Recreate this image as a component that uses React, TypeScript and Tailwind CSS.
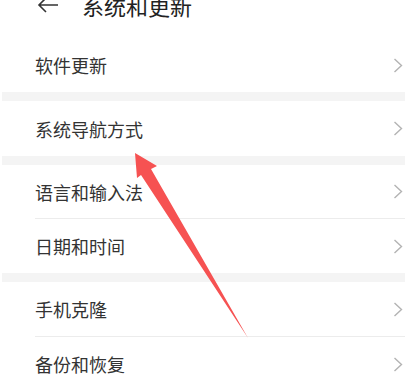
import React from 'react';

const font = { fontFamily: '"Noto Sans CJK SC", "Noto Sans", sans-serif' };

function Chevron() {
  return (
    <svg width="10" height="15" viewBox="0 0 10 15" className="shrink-0">
      <path d="M1.5 1 L8.5 7.5 L1.5 14" fill="none" stroke="#b3b3b3" strokeWidth="1.4" />
    </svg>
  );
}

function Row({ label, divider, tall }: { label: string; divider?: boolean; tall?: boolean }) {
  return (
    <div className="pl-[35px]">
      <div
        className={`flex items-center justify-between pr-[2px] ${tall ? 'h-[55px]' : 'h-[54px]'} ${
          divider ? 'border-b border-[#ececec]' : ''
        }`}
      >
        <span className="text-[18px] text-[#333333] leading-none">{label}</span>
        <Chevron />
      </div>
    </div>
  );
}

function Band() {
  return <div className="h-[9px] ml-[2px] bg-[#f4f4f4]" />;
}

export default function App() {
  return (
    <div className="relative w-[405px] h-[379px] overflow-hidden bg-white" style={font}>
      {/* Header */}
      <div className="-mt-[17px] h-[55px] pb-[11px] flex items-center pl-[37px]">
        <svg width="22" height="18" viewBox="0 0 22 18">
          <path d="M21 9 H2 M9 2 L2 9 L9 16" fill="none" stroke="#333" strokeWidth="1.6" />
        </svg>
        <span className="ml-[23px] text-[22px] text-[#222] leading-none">系统和更新</span>
      </div>

      <Row label="软件更新" />
      <Band />
      <Row label="系统导航方式" tall />
      <Band />
      <Row label="语言和输入法" divider />
      <Row label="日期和时间" />
      <Band />
      <Row label="手机克隆" divider tall />
      <Row label="备份和恢复" />

      {/* Red annotation arrow */}
      <svg className="absolute left-0 top-0 pointer-events-none" width="405" height="379" viewBox="0 0 405 379">
        <polygon points="135,153 157,166 151,169 248,338 141,175 137,178" fill="#f65252" />
      </svg>
    </div>
  );
}
